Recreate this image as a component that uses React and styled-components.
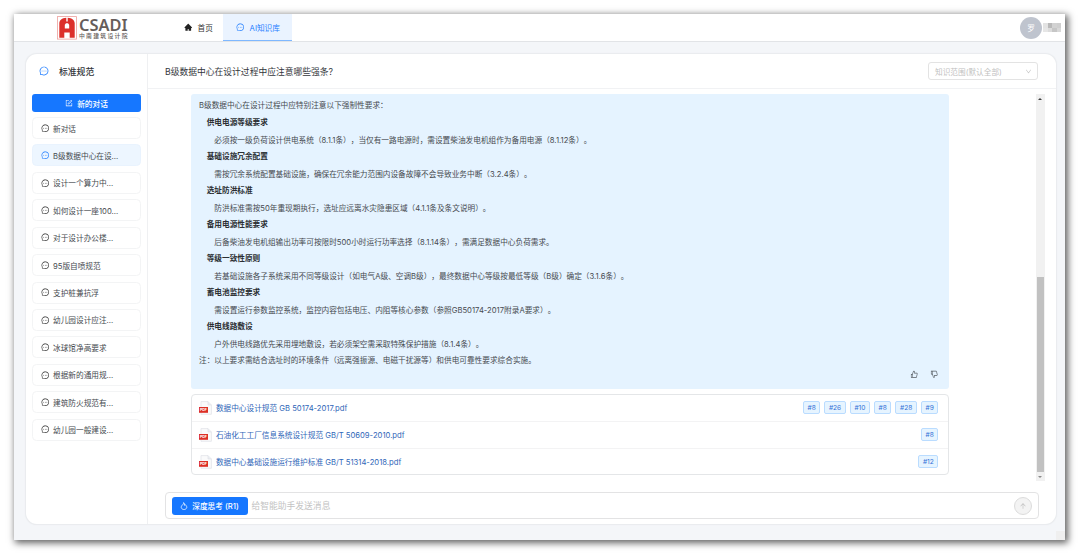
import styled, { createGlobalStyle } from "styled-components";
import {
    AiFillHome,
    AiOutlineMessage,
    AiOutlineForm,
    AiOutlineLike,
    AiOutlineDislike,
    AiOutlineDown,
    AiOutlineArrowUp,
} from "react-icons/ai";

const chats = [
    "新对话",
    "B级数据中心在设...",
    "设计一个算力中...",
    "如何设计一座100...",
    "对于设计办公楼...",
    "95版自喷规范",
    "支护桩兼抗浮",
    "幼儿园设计应注...",
    "冰球馆净高要求",
    "根据新的通用规...",
    "建筑防火规范有...",
    "幼儿园一般建设...",
];

const sections = [
    ["供电电源等级要求", "必须按一级负荷设计供电系统（8.1.1条），当仅有一路电源时，需设置柴油发电机组作为备用电源（8.1.12条）。"],
    ["基础设施冗余配置", "需按冗余系统配置基础设施，确保在冗余能力范围内设备故障不会导致业务中断（3.2.4条）。"],
    ["选址防洪标准", "防洪标准需按50年重现期执行，选址应远离水灾隐患区域（4.1.1条及条文说明）。"],
    ["备用电源性能要求", "后备柴油发电机组输出功率可按限时500小时运行功率选择（8.1.14条），需满足数据中心负荷需求。"],
    ["等级一致性原则", "若基础设施各子系统采用不同等级设计（如电气A级、空调B级），最终数据中心等级按最低等级（B级）确定（3.1.6条）。"],
    ["蓄电池监控要求", "需设置运行参数监控系统，监控内容包括电压、内阻等核心参数（参照GB50174-2017附录A要求）。"],
    ["供电线路敷设", "户外供电线路优先采用埋地敷设，若必须架空需采取特殊保护措施（8.1.4条）。"],
];

const files = [
    { name: "数据中心设计规范 GB 50174-2017.pdf", tags: ["#8", "#26", "#10", "#8", "#28", "#9"] },
    { name: "石油化工工厂信息系统设计规范 GB/T 50609-2010.pdf", tags: ["#8"] },
    { name: "数据中心基础设施运行维护标准 GB/T 51314-2018.pdf", tags: ["#12"] },
];

function Logo() {
    return (
        <svg width="72" height="27" viewBox="0 0 72 27">
            <rect x="0.5" y="2.6" width="19" height="22.5" fill="#fff" stroke="#eda09c" strokeWidth="0.8" />
            <path
                d="M2.3 23.8V9.3C2.3 6.4 5 4.1 9.3 3.8v3.6h1.4V3.8c4.3.3 7 2.6 7 5.5v14.5h-5V18.400H7.300v5.400zM7.800 10.800v3.800h4.400v-3.800L11 9.200H9z"
                fill="#dc2f2a"
                fillRule="evenodd"
            />
            <LogoName x="22" y="16.8" textLength="48.5" lengthAdjust="spacingAndGlyphs">CSADI</LogoName>
            <LogoSub x="22" y="23.6" textLength="48.5">中南建筑设计院</LogoSub>
        </svg>
    );
}

function PdfIcon() {
    return (
        <svg width="13" height="14" viewBox="0 0 13 14">
            <path d="M2 .6h7L12.4 4v9.3H2z" fill="#fafafb" stroke="#dfe1e8" strokeWidth="0.7" />
            <path d="M9 .6V4h3.4" fill="#eceef2" stroke="#dfe1e8" strokeWidth="0.7" />
            <rect x="0" y="6" width="9" height="5.8" fill="#dc2f26" />
            <PdfText x="1.1" y="10.4" textLength="6.8">PDF</PdfText>
        </svg>
    );
}

function DropIcon() {
    return (
        <svg viewBox="0 0 16 16" fill="none" stroke="currentColor" strokeWidth="1.5">
            <path
                d="M7.2 1.2C7.6 4 5.2 5.4 3.6 7.4C.8 11 3.4 15 8 15s7.2-4 4.4-7.6C11.6 6.4 11 5.8 10.4 5.2C10.2 6.2 9.8 6.6 9.4 6.8C9.6 4.4 8.8 2.4 7.2 1.2Z"
                strokeLinejoin="round"
            />
        </svg>
    );
}

function Header() {
    return (
        <TopBar>
            <Logo />
            <Nav>
                <NavItem $width={50}>
                    <AiFillHome color="#222" />
                    首页
                </NavItem>
                <NavItem $width={69} $active>
                    <AiOutlineMessage />
                    AI知识库
                </NavItem>
            </Nav>
            <User>
                <Avatar>罗</Avatar>
                <MaskedName>
                    <Mask $color="#e3e3e3" />
                    <Mask $color="#b9b9b9" />
                    <Mask $color="#d2d2d2" />
                    <Mask $color="#cfcfcf" />
                    <Mask $color="#e6e6e6" />
                    <Mask $color="#dcdcdc" />
                    <Mask $color="#c6c6c6" />
                    <Mask $color="#d8d8d8" />
                </MaskedName>
            </User>
        </TopBar>
    );
}

function Sidebar() {
    return (
        <Side>
            <SideTitle>
                <AiOutlineMessage />
                标准规范
            </SideTitle>
            <NewChat>
                <AiOutlineForm />
                新的对话
            </NewChat>
            <ChatList>
                {chats.map((chat, i) => (
                    <ChatItem key={chat} $active={i === 1}>
                        <AiOutlineMessage />
                        {chat}
                    </ChatItem>
                ))}
            </ChatList>
        </Side>
    );
}

function Answer() {
    return (
        <AnswerBox>
            <Line>B级数据中心在设计过程中应特别注意以下强制性要求：</Line>
            {sections.map(([title, text]) => (
                <Section key={title}>
                    <h4>{title}</h4>
                    <p>{text}</p>
                </Section>
            ))}
            <Line>注：以上要求需结合选址时的环境条件（远离强振源、电磁干扰源等）和供电可靠性要求综合实施。</Line>
            <Feedback>
                <AiOutlineLike />
                <AiOutlineDislike />
            </Feedback>
        </AnswerBox>
    );
}

function App() {
    return (
        <Page>
            <GlobalStyle />
            <Window>
                <Header />
                <Body>
                    <Card>
                        <Sidebar />
                        <Main>
                            <MainHeader>
                                <h1>B级数据中心在设计过程中应注意哪些强条?</h1>
                                <Select>
                                    知识范围(默认全部)
                                    <AiOutlineDown />
                                </Select>
                            </MainHeader>
                            <Scroll>
                                <Messages>
                                    <Answer />
                                    <FileList>
                                        {files.map((file) => (
                                            <FileRow key={file.name}>
                                                <PdfIcon />
                                                <FileName>{file.name}</FileName>
                                                {file.tags.map((tag, i) => (
                                                    <Tag key={i}>{tag}</Tag>
                                                ))}
                                            </FileRow>
                                        ))}
                                    </FileList>
                                </Messages>
                                <ScrollBar>
                                    <Arrow $up />
                                    <Thumb />
                                    <Arrow />
                                </ScrollBar>
                            </Scroll>
                            <InputBar>
                                <ThinkButton>
                                    <DropIcon />
                                    深度思考 (R1)
                                </ThinkButton>
                                <Placeholder>给智能助手发送消息</Placeholder>
                                <Send>
                                    <AiOutlineArrowUp />
                                </Send>
                            </InputBar>
                        </Main>
                    </Card>
                    <Corner />
                </Body>
            </Window>
        </Page>
    );
}

const GlobalStyle = createGlobalStyle`
    * {
        box-sizing: border-box;
    }
    body {
        margin: 0;
        background: #fff;
        font-family: Inter, "Noto Sans CJK SC", sans-serif;
        font-size: 7.67px;
        color: #454a4f;
        text-spacing-trim: space-all;
    }
    h1, h4, p {
        margin: 0;
    }
    svg {
        flex-shrink: 0;
    }
`;

const Page = styled.div`
    height: 554px;
    padding: 14px;
    overflow: hidden;
`;

const Window = styled.div`
    width: 1051px;
    height: 526px;
    display: flex;
    flex-direction: column;
    background: #f4f6f9;
    box-shadow: 2px 2px 7px 1px rgba(0, 0, 0, 0.62);
`;

const TopBar = styled.header`
    height: 28px;
    display: flex;
    align-items: stretch;
    background: #fff;
    border-bottom: 1px solid #e2e4e7;
    padding: 0 4px 0 43px;
`;

const LogoName = styled.text`
    font-family: "Noto Sans", sans-serif;
    font-size: 16.5px;
    font-weight: 600;
    fill: #665d5b;
`;

const LogoSub = styled.text`
    font-family: "Noto Sans CJK SC", sans-serif;
    font-size: 5.8px;
    font-weight: 500;
    fill: #665d5b;
`;

const PdfText = styled.text`
    font-size: 3.6px;
    font-weight: 700;
    fill: #fff;
`;

const Nav = styled.nav`
    display: flex;
    margin-left: 44px;
`;

const NavItem = styled.div`
    width: ${({ $width }) => $width}px;
    display: flex;
    align-items: center;
    justify-content: center;
    gap: 5px;
    padding-left: 1px;
    color: ${({ $active }) => ($active ? "#1f7dff" : "#333")};
    background: ${({ $active }) => ($active ? "#eaf3ff" : "transparent")};
    border-bottom: 1px solid ${({ $active }) => ($active ? "#7fb8ff" : "transparent")};

    svg {
        width: 8.5px;
        height: 8.5px;
    }
`;

const User = styled.div`
    display: flex;
    align-items: center;
    gap: 1px;
    margin-left: auto;
`;

const Avatar = styled.div`
    width: 22px;
    height: 22px;
    border-radius: 50%;
    background: #bfc4ce;
    color: #fff;
    display: flex;
    align-items: center;
    justify-content: center;
`;

const MaskedName = styled.div`
    display: grid;
    grid-template-columns: repeat(4, 4.5px);
    grid-auto-rows: 4.5px;
`;

const Mask = styled.span`
    background: ${({ $color }) => $color};
`;

const Body = styled.div`
    flex: 1;
    position: relative;
    padding: 12px 9px 16px 12px;
`;

const Corner = styled.div`
    position: absolute;
    right: 0;
    bottom: 0;
    width: 9px;
    height: 9px;
    background: #efefef;
`;

const Card = styled.div`
    height: 470px;
    display: flex;
    background: #fff;
    border-radius: 11px;
    box-shadow: 0 0 1px 0.5px #e9ebee;
`;

const Side = styled.aside`
    width: 122px;
    border-right: 1px solid #eff0f2;
    padding: 0 6px;
`;

const SideTitle = styled.div`
    height: 34px;
    margin-bottom: 6px;
    display: flex;
    align-items: center;
    gap: 10px;
    padding-left: 7px;
    font-size: 8.8px;
    font-weight: 500;
    color: #33363b;

    svg {
        width: 10px;
        height: 10px;
        color: #1f7dff;
    }
`;

const NewChat = styled.div`
    height: 18px;
    display: flex;
    align-items: center;
    justify-content: center;
    gap: 4px;
    border-radius: 3px;
    background: #1677ff;
    color: #fff;
    font-weight: 500;

    svg {
        width: 8px;
        height: 8px;
    }
`;

const ChatList = styled.div`
    display: flex;
    flex-direction: column;
    gap: 5.43px;
    margin-top: 5px;
`;

const ChatItem = styled.div`
    height: 22px;
    display: flex;
    align-items: center;
    gap: 3.5px;
    padding-left: 8px;
    border: 1px solid ${({ $active }) => ($active ? "#e9f3fe" : "#f3f4f5")};
    border-radius: 4.5px;
    background: ${({ $active }) => ($active ? "#edf6ff" : "#fff")};

    svg {
        width: 8.5px;
        height: 8.5px;
        color: ${({ $active }) => ($active ? "#1f7dff" : "#333")};
    }
`;

const Main = styled.main`
    flex: 1;
    display: flex;
    flex-direction: column;
`;

const MainHeader = styled.div`
    height: 35px;
    display: flex;
    align-items: center;
    justify-content: space-between;
    border-bottom: 1px solid #f1f2f4;
    padding: 0 18px 0 17px;

    h1 {
        font-size: 8.77px;
        font-weight: 400;
        color: #33363b;
    }
`;

const Select = styled.div`
    width: 110px;
    height: 18px;
    display: flex;
    align-items: center;
    justify-content: space-between;
    padding: 0 5px 0 6px;
    border: 1px solid #e3e3e3;
    border-radius: 3px;
    color: #bfbfbf;

    svg {
        width: 7px;
        height: 7px;
    }
`;

const Scroll = styled.div`
    height: 392px;
    display: flex;
    justify-content: space-between;
    padding: 5px 11.5px 0 43.4px;
`;

const Messages = styled.div`
    width: 758px;
`;

const AnswerBox = styled.div`
    height: 295px;
    padding: 2.5px 7.6px 0;
    border-radius: 3px;
    background: #e5f3ff;
    line-height: 17px;
    white-space: nowrap;
`;

const Line = styled.p`
    height: 17px;
`;

const Section = styled.section`
    padding-left: 7.7px;

    h4 {
        height: 17px;
        font-size: 7.67px;
        font-weight: 600;
        color: #2a2e32;
    }

    p {
        height: 17px;
        padding-left: 7.7px;
        line-height: 19px;
    }
`;

const Feedback = styled.div`
    display: flex;
    justify-content: flex-end;
    gap: 12px;
    padding: 1px 3px 0 0;

    svg {
        width: 8.5px;
        height: 8.5px;
        color: #555b62;
    }
`;

const FileList = styled.div`
    height: 81px;
    margin-top: 5px;
    border: 1px solid #e4e6e8;
    border-radius: 4px;
`;

const FileRow = styled.div`
    height: 27px;
    display: flex;
    align-items: center;
    gap: 4px;
    padding: 0 10px 1px 6.5px;
    border-bottom: 1px solid #f3f3f4;

    &:last-child {
        height: 25px;
        padding-bottom: 0;
        border-bottom: none;
    }
`;

const FileName = styled.span`
    flex: 1;
    color: #2f66b8;
`;

const Tag = styled.span`
    height: 13px;
    display: flex;
    align-items: center;
    padding: 0 3.6px;
    border: 1px solid #badcff;
    border-radius: 2px;
    background: #e6f4ff;
    color: #2f6fd6;
    font-size: 6.6px;
`;

const ScrollBar = styled.div`
    width: 9px;
    display: flex;
    flex-direction: column;
    justify-content: space-between;
    background: #f1f1f1;
`;

const Arrow = styled.span`
    height: 9px;
    display: flex;
    align-items: center;
    justify-content: center;

    &::before {
        content: "";
        border: 2px solid transparent;
        border-top-width: ${({ $up }) => ($up ? 0 : 2.5)}px;
        border-bottom-width: ${({ $up }) => ($up ? 2.5 : 0)}px;
        border-top-color: #8a8a8a;
        border-bottom-color: #404040;
    }
`;

const Thumb = styled.span`
    height: 195px;
    margin: auto 1px 0;
    background: #c1c1c1;
`;

const InputBar = styled.div`
    height: 27px;
    display: flex;
    align-items: center;
    margin: 11px 17.5px 0 17px;
    padding: 0 5.5px;
    border: 1px solid #e3e3e4;
    border-radius: 4px;
`;

const ThinkButton = styled.div`
    width: 76px;
    height: 18px;
    display: flex;
    align-items: center;
    justify-content: center;
    gap: 4px;
    border-radius: 3px;
    background: #1677ff;
    color: #fff;
    font-weight: 500;

    svg {
        width: 8px;
        height: 8px;
    }
`;

const Placeholder = styled.span`
    flex: 1;
    padding-left: 4px;
    font-size: 8.77px;
    color: #c3c3c3;
`;

const Send = styled.div`
    width: 18px;
    height: 18px;
    display: flex;
    align-items: center;
    justify-content: center;
    border: 1px solid #dcdcdc;
    border-radius: 50%;
    background: #f3f3f3;
    color: #bdbdbd;

    svg {
        width: 8px;
        height: 8px;
    }
`;

export default App;
